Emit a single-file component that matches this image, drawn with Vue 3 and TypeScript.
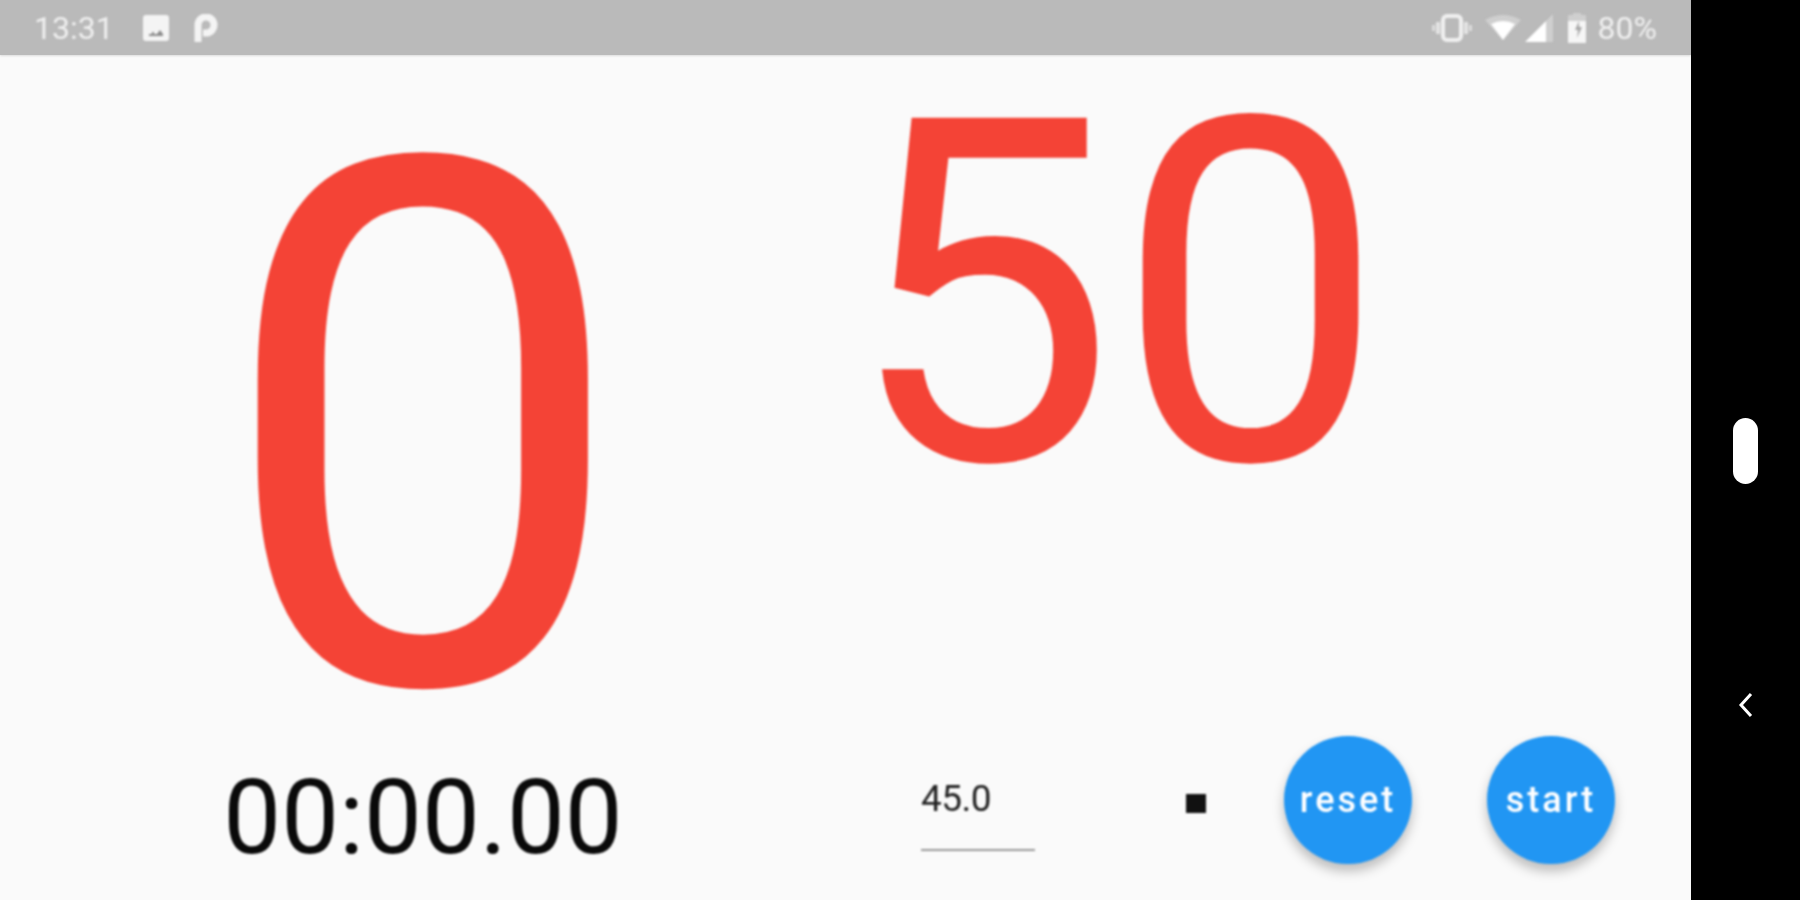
<script setup lang="ts">
const elapsed = '00:00.00'
const count = 0
const target = 50
const interval = '45.0'
const actions = ['reset', 'start']
</script>

<template>
  <div class="device">
    <div class="screen">
      <header class="status">
        <div class="status-left">
          <span class="clock">13:31</span>
          <svg class="ic-image" viewBox="0 0 26 28" width="26" height="28">
            <path fill="#f4f4f4" d="M3 1h20a3 3 0 0 1 3 3v20a3 3 0 0 1-3 3H3a3 3 0 0 1-3-3V4a3 3 0 0 1 3-3z" />
            <path fill="#8c8c8c" d="M6 20h3v-2h2v2h3l3-4 3 4v2H6z" />
          </svg>
          <svg class="ic-parking" viewBox="0 0 24 28" width="24" height="28">
            <path fill="none" stroke="#f4f4f4" stroke-width="7" d="M4 28V11a8 8 0 1 1 8 8H9" />
          </svg>
        </div>
        <div class="status-right">
          <svg viewBox="0 0 40 28" width="40" height="28">
            <rect x="11" y="2" width="18" height="24" rx="4" fill="none" stroke="#f0f0f0" stroke-width="4" />
            <rect x="4" y="8" width="4" height="12" fill="#e4e4e4" />
            <rect x="32" y="8" width="4" height="12" fill="#e4e4e4" />
            <rect x="0" y="11" width="3" height="6" fill="#dcdcdc" />
            <rect x="37" y="11" width="3" height="6" fill="#dcdcdc" />
          </svg>
          <svg class="ic-wifi" viewBox="0 0 36 25" width="36" height="25">
            <path fill="#cfcfcf" d="M0 5Q18-5 36 5L18 25z" />
            <path fill="#fff" d="M6 9Q18 3 30 9L18 25z" />
          </svg>
          <svg class="ic-signal" viewBox="0 0 28 28" width="28" height="28">
            <path fill="#cfcfcf" d="M28 0v28h-8V8z" />
            <path fill="#fff" d="M21 7v21H0z" />
          </svg>
          <svg class="ic-battery" viewBox="0 0 18 30" width="18" height="30">
            <path fill="#cfcfcf" d="M5 2V0h8v2h5v8H0V2z" />
            <path fill="#f6f6f6" d="M0 8h18v22H0z" />
            <path fill="#a8a8a8" d="M11 8l-4 9h3l-1 8 5-11h-3z" />
          </svg>
          <span class="battery">80%</span>
        </div>
      </header>

      <main class="body">
        <section class="left">
          <div class="count">{{ count }}</div>
          <div class="elapsed">{{ elapsed }}</div>
        </section>
        <section class="right">
          <div class="target">{{ target }}</div>
          <div class="controls">
            <div class="field">{{ interval }}</div>
            <span class="stop"></span>
            <button v-for="label in actions" :key="label" class="fab">{{ label }}</button>
          </div>
        </section>
      </main>
    </div>

    <aside class="nav">
      <span class="pill"></span>
      <svg class="chevron" viewBox="0 0 16 26" width="16" height="26">
        <path fill="none" stroke="#fff" stroke-width="3" d="M13 2L3 13l10 11" />
      </svg>
    </aside>
  </div>
</template>

<style scoped>
.device {
  display: flex;
  width: 1800px;
  height: 900px;
  overflow: hidden;
  background: #000;
  font-family: Roboto, "Liberation Sans", sans-serif;
}

.screen {
  width: 1691px;
  display: flex;
  flex-direction: column;
  background: #fafafa;
}

.status {
  height: 55px;
  flex: none;
  display: flex;
  justify-content: space-between;
  align-items: center;
  padding: 0 34px 0 34px;
  background: #bababa;
  box-shadow: 0 1px 2px rgba(0, 0, 0, 0.12);
  color: #f0f0f0;
  font-size: 32px;
}

.status-left,
.status-right {
  display: flex;
  align-items: center;
  filter: blur(1px);
}

.clock {
  width: 109px;
}

.ic-parking {
  margin-left: 25px;
}

.status-right svg {
  flex: none;
}

.ic-wifi {
  margin-left: 13px;
}

.ic-signal {
  margin-left: 4px;
}

.ic-battery {
  margin-left: 15px;
}

.battery {
  margin-left: 12px;
}

.body {
  flex: 1;
  display: flex;
  filter: blur(0.8px);
}

.left {
  width: 846px;
  display: flex;
  flex-direction: column;
  align-items: center;
}

.count {
  margin-top: 36px;
  height: 670px;
  font-size: 735px;
  line-height: 680px;
  color: #f44336;
}

.elapsed {
  margin-top: -2px;
  font-size: 103px;
  line-height: 118px;
  color: #0a0a0a;
}

.right {
  flex: 1;
  display: flex;
  flex-direction: column;
}

.target {
  height: 681px;
  font-size: 480px;
  line-height: 480px;
  color: #f44336;
}

.controls {
  display: flex;
  align-items: center;
  padding-left: 75px;
}

.field {
  width: 114px;
  height: 102px;
  box-sizing: border-box;
  padding-top: 27px;
  border-bottom: 2px solid #999;
  font-size: 37px;
  line-height: 46px;
  letter-spacing: -0.5px;
  color: #222;
}

.stop {
  width: 20px;
  height: 19px;
  margin: 6px 78px 0 151px;
  background: #111;
}

.fab {
  width: 128px;
  height: 128px;
  padding: 0;
  border: 0;
  border-radius: 50%;
  background: #2196f3;
  box-shadow: 0 7px 12px rgba(0, 0, 0, 0.25);
  color: #fff;
  font-family: inherit;
  font-size: 36px;
  font-weight: 500;
  letter-spacing: 3px;
}

.fab + .fab {
  margin-left: 75px;
}

.nav {
  flex: 1;
  position: relative;
}

.pill {
  position: absolute;
  left: 42px;
  top: 418px;
  width: 25px;
  height: 66px;
  border-radius: 13px;
  background: #fff;
}

.chevron {
  position: absolute;
  left: 47px;
  top: 692px;
}
</style>
